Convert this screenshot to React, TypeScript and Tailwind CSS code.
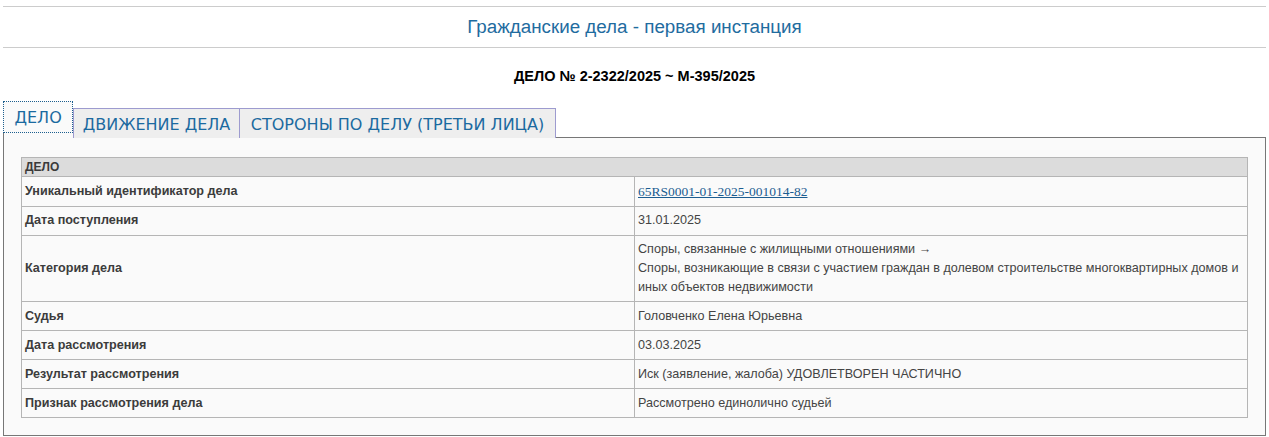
import React from "react"

interface Row {
  label: string
  value: React.ReactNode
}

const rows: Row[] = [
  {
    label: "Уникальный идентификатор дела",
    value: (
      <a href="#" className="font-['Liberation_Serif',serif] text-[13.5px] text-[#1c5d91] underline">
        65RS0001-01-2025-001014-82
      </a>
    ),
  },
  { label: "Дата поступления", value: "31.01.2025" },
  {
    label: "Категория дела",
    value: (
      <>
        Споры, связанные с жилищными отношениями →
        <br />
        Споры, возникающие в связи с участием граждан в долевом строительстве многоквартирных домов и иных объектов
        недвижимости
      </>
    ),
  },
  { label: "Судья", value: "Головченко Елена Юрьевна" },
  { label: "Дата рассмотрения", value: "03.03.2025" },
  { label: "Результат рассмотрения", value: "Иск (заявление, жалоба) УДОВЛЕТВОРЕН ЧАСТИЧНО" },
  { label: "Признак рассмотрения дела", value: "Рассмотрено единолично судьей" },
]

export default function App() {
  return (
    <div className="min-h-[437px] bg-white font-['Liberation_Sans',Arial,sans-serif]">
      <div className="pt-[6px]">
        {/* Title */}
        <div className="mx-[3px] border-y border-[#cccccc] h-[42px] flex items-center justify-center">
          <h1 className="text-[18.8px] text-[#1f6c9f] leading-none">Гражданские дела - первая инстанция</h1>
        </div>

        {/* Case number */}
        <div className="h-[53px] flex items-center justify-center pt-[4px]">
          <h2 className="text-[14.5px] font-bold text-black">ДЕЛО № 2-2322/2025 ~ М-395/2025</h2>
        </div>

        {/* Tabs */}
        <div className="mx-[3px]">
          <ul className="flex items-end font-['DejaVu_Sans',Verdana,sans-serif] text-[16px] leading-[20px] text-[#1b6aa0] relative z-10 -mb-px">
            <li className="flex flex-col bg-[#fafafa]">
              <a href="#" className="block h-[32px] px-[10.5px] pt-[6px] border border-dotted border-[#1d5f8e]">
                ДЕЛО
              </a>
              <div className="h-[5px] border-l border-[#777777]" />
            </li>
            <li className="bg-[#eeeeee] border border-b-0 border-[#9d9bcf]">
              <a href="#" className="block h-[29px] px-[8.5px] pt-[6px]">
                ДВИЖЕНИЕ ДЕЛА
              </a>
            </li>
            <li className="bg-[#eeeeee] border border-b-0 border-l-0 border-[#9d9bcf]">
              <a href="#" className="block h-[29px] px-[11px] pt-[6px]">
                СТОРОНЫ ПО ДЕЛУ (ТРЕТЬИ ЛИЦА)
              </a>
            </li>
          </ul>

          {/* Panel */}
          <div className="border border-[#777777] bg-[#fafafa] px-[17px] pt-[19px] pb-[17px]">
            <table className="w-full border-collapse text-[12.6px] text-[#444444]">
              <thead>
                <tr className="bg-[#dcdcdc]">
                  <th colSpan={2} className="border border-[#b5b5b5] text-left font-bold text-[12px] text-[#3a3a3a] px-[3px] py-0 h-[19px] leading-[17px]">
                    ДЕЛО
                  </th>
                </tr>
              </thead>
              <tbody>
                {rows.map((r) => (
                  <tr key={r.label}>
                    <td className="w-1/2 h-[29px] border border-[#b5b5b5] px-[3px] pt-[4.5px] pb-[4px] leading-[19px] font-bold text-[#3c3c3c] align-middle">
                      {r.label}
                    </td>
                    <td className="w-1/2 h-[29px] border border-[#b5b5b5] px-[3px] pt-[4.5px] pb-[4px] leading-[19px] align-middle">
                      {r.value}
                    </td>
                  </tr>
                ))}
              </tbody>
            </table>
          </div>
        </div>
      </div>
    </div>
  )
}
